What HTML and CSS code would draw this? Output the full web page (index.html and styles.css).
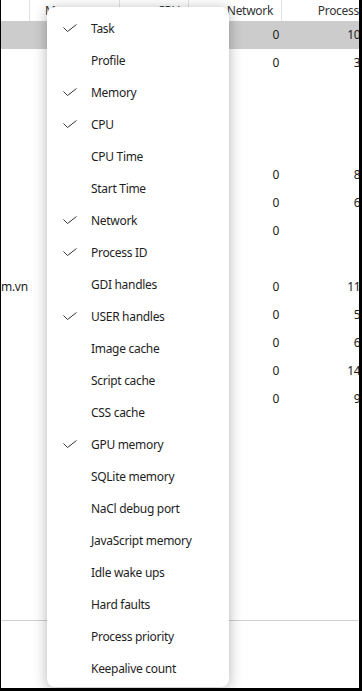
FILE: index.html
```html
<!DOCTYPE html>
<html lang="en">
<head>
<meta charset="utf-8">
<title>Task Manager columns</title>
<link rel="stylesheet" href="styles.css">
</head>
<body>
<div class="window">
  <div class="table">
    <div class="thead">
      <div class="th c1"></div>
      <div class="th c2"><span>Memory</span><span class="sort">&#9660;</span></div>
      <div class="th c3">CPU</div>
      <div class="th c4">Network</div>
      <div class="th c5">Process ID</div>
    </div>
    <div class="tbody">
      <div class="row selected"><div class="td"></div><div class="td"></div><div class="td"></div><div class="td num">0</div><div class="td num">10184</div></div>
      <div class="row"><div class="td"></div><div class="td"></div><div class="td"></div><div class="td num">0</div><div class="td num">3960</div></div>
      <div class="row"><div class="td"></div><div class="td"></div><div class="td"></div><div class="td num"></div><div class="td num"></div></div>
      <div class="row"><div class="td"></div><div class="td"></div><div class="td"></div><div class="td num"></div><div class="td num"></div></div>
      <div class="row"><div class="td"></div><div class="td"></div><div class="td"></div><div class="td num"></div><div class="td num"></div></div>
      <div class="row"><div class="td"></div><div class="td"></div><div class="td"></div><div class="td num">0</div><div class="td num">8112</div></div>
      <div class="row"><div class="td"></div><div class="td"></div><div class="td"></div><div class="td num">0</div><div class="td num">6204</div></div>
      <div class="row"><div class="td"></div><div class="td"></div><div class="td"></div><div class="td num">0</div><div class="td num"></div></div>
      <div class="row"><div class="td"></div><div class="td"></div><div class="td"></div><div class="td num"></div><div class="td num"></div></div>
      <div class="row"><div class="td name">m.vn</div><div class="td"></div><div class="td"></div><div class="td num">0</div><div class="td num">11420</div></div>
      <div class="row"><div class="td"></div><div class="td"></div><div class="td"></div><div class="td num">0</div><div class="td num">5536</div></div>
      <div class="row"><div class="td"></div><div class="td"></div><div class="td"></div><div class="td num">0</div><div class="td num">6848</div></div>
      <div class="row"><div class="td"></div><div class="td"></div><div class="td"></div><div class="td num">0</div><div class="td num">14376</div></div>
      <div class="row"><div class="td"></div><div class="td"></div><div class="td"></div><div class="td num">0</div><div class="td num">9072</div></div>
    </div>
  </div>

  <div class="menu">
    <div class="item checked"><svg class="check" width="14" height="8" viewBox="0 0 14 8"><polyline points="0.5,3.5 4.5,7.5 13.5,0.5"/></svg><span class="label">Task</span></div>
    <div class="item"><span class="label">Profile</span></div>
    <div class="item checked"><svg class="check" width="14" height="8" viewBox="0 0 14 8"><polyline points="0.5,3.5 4.5,7.5 13.5,0.5"/></svg><span class="label">Memory</span></div>
    <div class="item checked"><svg class="check" width="14" height="8" viewBox="0 0 14 8"><polyline points="0.5,3.5 4.5,7.5 13.5,0.5"/></svg><span class="label">CPU</span></div>
    <div class="item"><span class="label">CPU Time</span></div>
    <div class="item"><span class="label">Start Time</span></div>
    <div class="item checked"><svg class="check" width="14" height="8" viewBox="0 0 14 8"><polyline points="0.5,3.5 4.5,7.5 13.5,0.5"/></svg><span class="label">Network</span></div>
    <div class="item checked"><svg class="check" width="14" height="8" viewBox="0 0 14 8"><polyline points="0.5,3.5 4.5,7.5 13.5,0.5"/></svg><span class="label">Process ID</span></div>
    <div class="item"><span class="label">GDI handles</span></div>
    <div class="item checked"><svg class="check" width="14" height="8" viewBox="0 0 14 8"><polyline points="0.5,3.5 4.5,7.5 13.5,0.5"/></svg><span class="label">USER handles</span></div>
    <div class="item"><span class="label">Image cache</span></div>
    <div class="item"><span class="label">Script cache</span></div>
    <div class="item"><span class="label">CSS cache</span></div>
    <div class="item checked"><svg class="check" width="14" height="8" viewBox="0 0 14 8"><polyline points="0.5,3.5 4.5,7.5 13.5,0.5"/></svg><span class="label">GPU memory</span></div>
    <div class="item"><span class="label">SQLite memory</span></div>
    <div class="item"><span class="label">NaCl debug port</span></div>
    <div class="item"><span class="label">JavaScript memory</span></div>
    <div class="item"><span class="label">Idle wake ups</span></div>
    <div class="item"><span class="label">Hard faults</span></div>
    <div class="item"><span class="label">Process priority</span></div>
    <div class="item"><span class="label">Keepalive count</span></div>
  </div>
</div>
</body>
</html>
```

FILE: styles.css
```css
html, body {
  margin: 0;
  padding: 0;
  background: #000;
}

body {
  font-family: "Noto Sans", "Open Sans", "Liberation Sans", sans-serif;
  font-size: 12px;
  letter-spacing: -0.3px;
  color: #222;
}

.window {
  position: relative;
  width: 362px;
  height: 691px;
  box-sizing: border-box;
  border-left: 1px solid #000;
  border-right: 3px solid #000;
  border-bottom: 3px solid #000;
  background: #fff;
  overflow: hidden;
}

.table {
  height: 620px;
  border-bottom: 1px solid #cfcfcf;
}

.thead,
.row {
  display: grid;
  grid-template-columns: 28px 90px 69px 93px 101px;
  width: 381px;
}

.thead {
  height: 21px;
}

.th {
  height: 21px;
  line-height: 21px;
  color: #333;
  text-align: right;
  padding-right: 8px;
  box-sizing: border-box;
  white-space: nowrap;
}

.th + .th {
  border-left: 1px solid #e3e3e3;
}

.c2 {
  display: flex;
  justify-content: space-between;
  text-align: left;
  padding-left: 15px;
  padding-right: 12px;
}

.sort {
  font-size: 9px;
  color: #222;
}

.row {
  height: 28px;
  line-height: 28px;
}

.row.selected {
  background: #cccccc;
}

.td {
  white-space: nowrap;
  overflow: hidden;
  color: #222;
}

.td.num {
  text-align: right;
  padding-right: 2px;
}

.td.name {
  padding-left: 0;
}

.menu {
  position: absolute;
  left: 46px;
  top: 7px;
  width: 182px;
  height: 680px;
  box-sizing: border-box;
  padding: 5px 0 3px;
  background: #fff;
  border-radius: 8px;
  box-shadow: 0 2px 14px rgba(0, 0, 0, 0.3);
}

.item {
  display: flex;
  align-items: center;
  height: 32px;
  padding-left: 44px;
  position: relative;
  color: #1e1e1e;
  white-space: nowrap;
}

.check {
  position: absolute;
  left: 16px;
  top: 12px;
  fill: none;
  stroke: #333;
  stroke-width: 1;
}
```
